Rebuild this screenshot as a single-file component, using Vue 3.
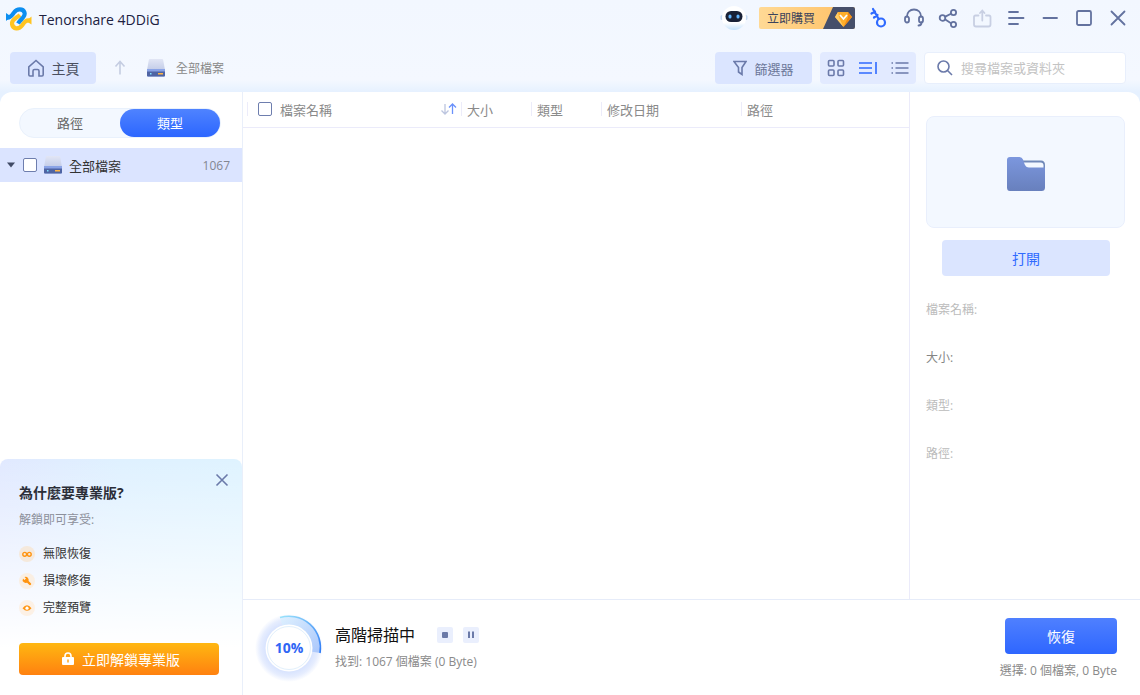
<script setup>
import { ref } from 'vue'

const percent = ref(10)
const tab = ref('type')
const columns = ['大小', '類型', '修改日期', '路徑']
const details = [
  { label: '檔案名稱:', strong: false },
  { label: '大小:', strong: true },
  { label: '類型:', strong: false },
  { label: '路徑:', strong: false },
]
</script>

<template>
  <div class="app">
    <header class="titlebar">
      <svg class="logo" width="26" height="24" viewBox="0 0 26 24" fill="none">
        <path d="M14 8 C10 11.500 5.500 12.500 6 17 C7 22.500 13 22.500 16 18.500 C18.500 15 20 12.500 24.500 13.800" stroke="#ffc421" stroke-width="4.200" />
        <path d="M25.500 9.500 V17.500 L20 14 Z" fill="#ffc421" />
        <path d="M1 10.500 C4 11.500 6 8 8 5.500 C11 1.500 17 1.300 18.500 5.500 C20 9.500 15 11.500 12 16.500" stroke="#0c8ef0" stroke-width="4.200" />
        <path d="M0 6 L5 9.500 L0 14 Z" fill="#0c8ef0" />
      </svg>
      <h1 class="app-name">Tenorshare 4DDiG</h1>

      <button class="robot" aria-label="AI">
        <svg width="28" height="26" viewBox="0 0 28 26">
          <defs>
            <linearGradient id="bot" x1="0" y1="0" x2="0" y2="1">
              <stop offset="0.700" stop-color="#fff" /><stop offset="1" stop-color="#c5e2fb" />
            </linearGradient>
          </defs>
          <rect x="0.500" y="10" width="3" height="5" rx="1.500" fill="#c3d9f4" />
          <rect x="24.500" y="10" width="3" height="5" rx="1.500" fill="#c3d9f4" />
          <circle cx="14" cy="13" r="12" fill="url(#bot)" />
          <rect x="5.500" y="6" width="17" height="11" rx="5.500" fill="#192136" />
          <rect x="8.500" y="9.500" width="3" height="4" rx="1.500" fill="#62b5ff" />
          <rect x="16.500" y="9.500" width="3" height="4" rx="1.500" fill="#62b5ff" />
        </svg>
      </button>

      <button class="buy">
        <span class="buy-text">立即購買</span>
        <svg width="32" height="22" viewBox="0 0 32 22">
          <path d="M10 0 H32 V22 H0 Z" fill="#464f6a" />
          <path d="M15 5 H25 L29 10 L20.500 20 L12 10 Z" fill="#ffae2b" />
          <path d="M15 5 L16 10.500 L20.500 20 L12 10 Z" fill="#ffcd68" />
          <path d="M25 5 L25 10.500 L20.500 20 L29 10 Z" fill="#f28a14" />
          <path d="M17 8 L20.500 12 L24 8" fill="none" stroke="#fff" stroke-width="1.800" />
        </svg>
      </button>

      <nav class="window-tools">
        <button aria-label="註冊" class="key">
          <svg width="22" height="22" viewBox="0 0 22 22"><circle cx="12" cy="15.500" r="4" /><path d="M9.500 11.800 L4 2 M2.500 6.500 L6 4.500 M5 10.500 L8.500 8" /></svg>
        </button>
        <button aria-label="支援">
          <svg width="22" height="22" viewBox="0 0 22 22"><path d="M4 9.500 C4 5 7 2.500 11 2.500 C15 2.500 18 5 18 9.500" /><rect x="2" y="9.500" width="4" height="6" rx="2" /><rect x="16" y="9.500" width="4" height="6" rx="2" /><path d="M18.500 15.500 C18.500 18 17.500 18.500 15.500 18.500" /></svg>
        </button>
        <button aria-label="分享">
          <svg width="22" height="22" viewBox="0 0 22 22"><circle cx="5.500" cy="11" r="2.800" /><circle cx="16.500" cy="5.500" r="2.600" /><circle cx="16.500" cy="17.500" r="2.600" /><path d="M8.300 9.600 L14 6.700 M8.300 12.500 L14 16.200" /></svg>
        </button>
        <button aria-label="匯出" class="faded">
          <svg width="22" height="22" viewBox="0 0 22 22"><path d="M7.500 8.500 H4.500 Q3 8.500 3 10 V17.500 Q3 19.500 5 19.500 H17.500 Q19.500 19.500 19.500 17.500 V10 Q19.500 8.500 18 8.500 H15 M11.300 13.500 V4 M9 6 L11.300 3.500 L13.500 6" /></svg>
        </button>
        <button aria-label="選單">
          <svg width="22" height="22" viewBox="0 0 22 22"><path d="M4 5 H13 M4 11 H18.500 M4 17 H13" /></svg>
        </button>
        <button aria-label="最小化">
          <svg width="22" height="22" viewBox="0 0 22 22"><path d="M4.500 11 H18" /></svg>
        </button>
        <button aria-label="最大化">
          <svg width="22" height="22" viewBox="0 0 22 22"><rect x="4" y="4" width="14" height="14" rx="1.500" /></svg>
        </button>
        <button aria-label="關閉">
          <svg width="22" height="22" viewBox="0 0 22 22"><path d="M4.500 4.500 L17.500 17.500 M17.500 4.500 L4.500 17.500" /></svg>
        </button>
      </nav>
    </header>

    <div class="toolbar">
      <button class="home">
        <svg width="18" height="18" viewBox="0 0 18 18" class="line"><path d="M6 17 H3 Q1.800 17 1.800 15.800 V7.800 L9 1.500 L16.200 7.800 V15.800 Q16.200 17 15 17 H12 V12 Q12 10.500 10.500 10.500 H7.500 Q6 10.500 6 12 Z" /></svg>
        主頁
      </button>
      <button class="up" aria-label="上一層">
        <svg width="14" height="16" viewBox="0 0 14 16" class="line"><path d="M7 14.500 V2 M2.500 6.500 L7 1.500 L11.500 6.500" /></svg>
      </button>
      <div class="crumb">
        <svg width="20" height="20" viewBox="0 0 20 20">
          <defs>
            <linearGradient id="drive" x1="0" y1="0" x2="0" y2="1">
              <stop offset="0" stop-color="#e2e6f5" /><stop offset="1" stop-color="#c3cce8" />
            </linearGradient>
          </defs>
          <path d="M4 1 H16 Q17 1 17.200 2 L19 12 H1 L2.800 2 Q3 1 4 1 Z" fill="url(#drive)" />
          <path d="M1 11 H19 V17.500 Q19 18.500 18 18.500 H2 Q1 18.500 1 17.500 Z" fill="#8aa3e6" />
          <path d="M1 13.500 H19 V17.500 Q19 18.500 18 18.500 H2 Q1 18.500 1 17.500 Z" fill="#4f64a3" />
          <rect x="4" y="15" width="1.500" height="1.500" fill="#7fe0ff" /><rect x="12" y="15" width="5" height="1.500" fill="#ffb545" />
        </svg>
        <span>全部檔案</span>
      </div>
      <button class="filter">
        <svg width="14" height="16" viewBox="0 0 14 16" class="line"><path d="M1 1.500 H13 L9 7.500 V14.500 L5.500 12 V7.500 Z" /></svg>
        篩選器
      </button>
      <div class="views">
        <button aria-label="格狀">
          <svg width="18" height="18" viewBox="0 0 18 18" class="line"><rect x="1.500" y="1.500" width="5.500" height="5.500" rx="1" /><rect x="11" y="1.500" width="5.500" height="5.500" rx="1" /><rect x="1.500" y="11" width="5.500" height="5.500" rx="1" /><rect x="11" y="11" width="5.500" height="5.500" rx="1" /></svg>
        </button>
        <button aria-label="預覽" class="on">
          <svg width="18" height="18" viewBox="0 0 18 18" class="line"><path d="M0 4 H13 M0 9 H13 M0 14 H13 M17 3 V15" /></svg>
        </button>
        <button aria-label="列表">
          <svg width="18" height="18" viewBox="0 0 18 18" class="line"><path d="M0.500 4 H2 M4.500 4 H17.500 M0.500 9 H2 M4.500 9 H17.500 M0.500 14 H2 M4.500 14 H17.500" stroke-width="1.400" /></svg>
        </button>
      </div>
      <label class="search">
        <svg width="18" height="18" viewBox="0 0 18 18" class="line"><circle cx="7.500" cy="7.500" r="5.500" /><path d="M11.500 11.500 L16 16" /></svg>
        <input type="text" placeholder="搜尋檔案或資料夾" aria-label="搜尋檔案或資料夾" />
      </label>
    </div>

    <div class="body">
      <aside class="sidebar">
        <div class="tabs">
          <button :class="{ active: tab === 'path' }" @click="tab = 'path'">路徑</button>
          <button :class="{ active: tab === 'type' }" @click="tab = 'type'">類型</button>
        </div>
        <div class="tree-row">
          <svg width="8" height="6" viewBox="0 0 8 6"><path d="M0 0.500 H8 L4 5.500 Z" fill="#414b66" /></svg>
          <input id="all" type="checkbox" class="check" />
          <label for="all">
            <svg width="20" height="20" viewBox="0 0 20 20">
              <path d="M4 1 H16 Q17 1 17.200 2 L19 12 H1 L2.800 2 Q3 1 4 1 Z" fill="url(#drive)" />
              <path d="M1 11 H19 V17.500 Q19 18.500 18 18.500 H2 Q1 18.500 1 17.500 Z" fill="#8aa3e6" />
              <path d="M1 13.500 H19 V17.500 Q19 18.500 18 18.500 H2 Q1 18.500 1 17.500 Z" fill="#4f64a3" />
              <rect x="4" y="15" width="1.500" height="1.500" fill="#7fe0ff" /><rect x="12" y="15" width="5" height="1.500" fill="#ffb545" />
            </svg>
            全部檔案
          </label>
          <span class="count">1067</span>
        </div>

        <section class="promo">
          <button class="promo-close" aria-label="關閉">
            <svg width="14" height="14" viewBox="0 0 14 14" class="line"><path d="M1.500 1.500 L12.500 12.500 M12.500 1.500 L1.500 12.500" /></svg>
          </button>
          <h2>為什麼要專業版?</h2>
          <p>解鎖即可享受:</p>
          <ul>
            <li>
              <svg width="16" height="16" viewBox="0 0 16 16"><circle cx="8" cy="8" r="8" fill="#f5e9dc" /><circle cx="5.700" cy="8.300" r="1.900" class="amber" /><circle cx="10.300" cy="8.300" r="1.900" class="amber" /></svg>
              無限恢復
            </li>
            <li>
              <svg width="16" height="16" viewBox="0 0 16 16"><circle cx="8" cy="8" r="8" fill="#faefe3" /><path d="M7.500 7.500 L11 11" stroke="#ff9410" stroke-width="2.400" stroke-linecap="round" /><path d="M5.500 4 L7 5.500 L5.500 7 L4 5.500 A3 3 0 1 0 9 5 A3 3 0 0 0 5.500 4 Z" fill="#ff9410" /></svg>
              損壞修復
            </li>
            <li>
              <svg width="16" height="16" viewBox="0 0 16 16"><circle cx="8" cy="8" r="8" fill="#fcf1e6" /><path d="M3.500 8.200 Q8 2.500 12.500 8.200 Q8 13.500 3.500 8.200 Z" fill="#ff9410" /><circle cx="8" cy="8.200" r="1.600" fill="#fff" /></svg>
              完整預覽
            </li>
          </ul>
          <button class="unlock">
            <svg width="12" height="14" viewBox="0 0 12 14"><path d="M3 6 V4 Q3 1 6 1 Q9 1 9 4 V6" fill="none" stroke="#fff" stroke-width="1.600" /><rect x="0" y="5" width="12" height="8" rx="1" fill="#fff" /><path d="M6 7.500 V10.500" stroke="#ffa51a" stroke-width="1.500" /></svg>
            立即解鎖專業版
          </button>
        </section>
      </aside>

      <main class="main">
        <div class="content">
          <div class="files">
            <table>
              <colgroup><col class="c-name" /><col class="c-small" /><col class="c-small" /><col class="c-date" /><col /></colgroup>
              <thead>
                <tr>
                  <th>
                    <div class="cell name">
                      <input id="names" type="checkbox" class="check" />
                      <label for="names">檔案名稱</label>
                      <svg width="18" height="14" viewBox="0 0 18 14" fill="none" stroke-width="1.300"><path d="M5 2 V11.500 M1.500 8.500 L5 12 L8.500 8.500" stroke="#bcc5df" /><path d="M12.500 12 V2.500 M9 5.500 L12.500 2 L16 5.500" stroke="#6a91fb" /></svg>
                    </div>
                  </th>
                  <th v-for="c in columns" :key="c"><div class="cell">{{ c }}</div></th>
                </tr>
              </thead>
            </table>
          </div>
          <aside class="details">
            <div class="preview">
              <svg width="40" height="36" viewBox="0 0 40 36">
                <defs>
                  <linearGradient id="folder" x1="0" y1="0" x2="0" y2="1">
                    <stop offset="0" stop-color="#7c97de" /><stop offset="1" stop-color="#6880bd" />
                  </linearGradient>
                </defs>
                <path d="M14 4.500 H35 Q39 4.500 39 9 V14 H14 Z" fill="#7089b8" />
                <path d="M16 6.500 H34.500 Q37.500 6.500 37.500 9.500 V13 H16 Z" fill="#f3f8ff" />
                <path d="M4 1 H13.500 Q16 1 17 3.500 L18.500 8 Q20 11.500 23 11.500 H39 V31.500 Q39 35 35.500 35 H4 Q1 35 1 31.500 V4 Q1 1 4 1 Z" fill="url(#folder)" />
              </svg>
            </div>
            <button class="open">打開</button>
            <ul>
              <li v-for="d in details" :key="d.label" :class="{ strong: d.strong }">{{ d.label }}</li>
            </ul>
          </aside>
        </div>

        <footer class="footer">
          <div class="ring">
            <svg width="68" height="68" viewBox="0 0 68 68">
              <defs>
                <linearGradient id="arc" x1="0" y1="0" x2="1" y2="1">
                  <stop offset="0" stop-color="#9be4fb" /><stop offset="1" stop-color="#2f7bf6" />
                </linearGradient>
                <linearGradient id="wedge" x1="0" y1="0" x2="1" y2="1">
                  <stop offset="0" stop-color="#dff1ff" /><stop offset="1" stop-color="#a9c6fb" />
                </linearGradient>
                <radialGradient id="halo">
                  <stop offset="0.700" stop-color="#d9e4fe" /><stop offset="0.850" stop-color="#e6edfe" /><stop offset="1" stop-color="#fff" />
                </radialGradient>
              </defs>
              <circle cx="34" cy="34" r="34" fill="url(#halo)" />
              <path d="M25 3.500 A31.500 31.500 0 0 1 65 39 L34 34 Z" fill="url(#wedge)" />
              <path d="M25 3.500 A31.500 31.500 0 0 1 65 39" fill="none" stroke="url(#arc)" stroke-width="1.600" />
              <circle cx="34" cy="34" r="23.500" fill="#fff" />
              <circle cx="34" cy="34" r="21.500" fill="none" stroke="#e2f0fc" />
            </svg>
            <strong>{{ percent }}%</strong>
          </div>
          <div class="status">
            <div class="status-top">
              <h2>高階掃描中</h2>
              <button aria-label="停止"><svg width="16" height="16" viewBox="0 0 16 16"><rect x="5" y="5" width="6" height="6" rx="1" fill="#6b7aa8" /></svg></button>
              <button aria-label="暫停"><svg width="16" height="16" viewBox="0 0 16 16"><path d="M6 4.500 V11 M10 4.500 V11" stroke="#6b7aa8" stroke-width="2" /></svg></button>
            </div>
            <p>找到: 1067 個檔案 (0 Byte)</p>
          </div>
          <div class="result">
            <button class="recover">恢復</button>
            <p>選擇: 0 個檔案, 0 Byte</p>
          </div>
        </footer>
      </main>
    </div>
  </div>
</template>

<style>
body { margin: 0; }
</style>

<style scoped>
* { box-sizing: border-box; }
.app {
  min-height: 100vh;
  display: flex;
  flex-direction: column;
  background: linear-gradient(#f2f7ff 0, #f4f8ff 80px, #e6f1ff 92px);
  font-family: "Open Sans", "Noto Sans CJK TC", sans-serif;
  font-size: 13px;
  color: #333;
}
button { font: inherit; color: inherit; border: 0; padding: 0; background: none; display: flex; align-items: center; justify-content: center; cursor: pointer; }
h1, h2, p, ul { margin: 0; padding: 0; list-style: none; font-weight: 400; }
svg { flex: none; display: block; }
.line { fill: none; stroke: #6b7aaa; stroke-width: 1.600; }
.amber { fill: none; stroke: #ff9410; stroke-width: 1.400; }

.titlebar { height: 36px; display: flex; align-items: center; padding: 0 5px 0 6px; }
.logo { margin-top: 2px; }
.app-name { margin: 4px auto 0 7px; font-size: 14px; line-height: 20px; color: #20213f; }
.robot { margin-right: 11px; }
.buy { height: 22px; border-radius: 2px; overflow: hidden; background: linear-gradient(90deg, #ffd995, #ffc064); font-size: 12px; color: #3c435b; margin-right: 8px; }
.buy-text { padding: 0 8px; }
.window-tools { display: flex; }
.window-tools button { width: 34px; height: 36px; }
.window-tools svg { fill: none; stroke: #63729f; stroke-width: 1.800; stroke-linecap: round; }
.window-tools .key svg { stroke: #2f6aff; stroke-width: 2.200; }
.window-tools .faded svg { stroke: #c8cfe3; }

.toolbar { display: flex; align-items: center; height: 56px; padding: 8px 14px 0 10px; }
.home, .filter, .views { height: 32px; border-radius: 4px; background: #dbe5ff; }
.home { width: 86px; gap: 7px; font-size: 14px; color: #4a4f60; }
.up { width: 48px; }
.up .line { stroke: #c5cde2; }
.crumb { display: flex; align-items: center; gap: 10px; margin: 0 auto 0 2px; font-size: 12px; color: #888; }
.filter { width: 97px; gap: 7px; color: #6b7799; margin-right: 8px; }
.views { display: flex; width: 96px; background: #e2eaff; margin-right: 8px; }
.views button { flex: 1; }
.views .on .line { stroke: #2f6aff; }
.search { width: 202px; height: 32px; display: flex; align-items: center; gap: 7px; padding: 0 11px; background: #fff; border: 1px solid #e8effc; border-radius: 4px; }
.search input { flex: 1; min-width: 0; border: 0; outline: 0; padding: 0; background: none; font: inherit; }
.search input::placeholder { color: #c3c3c3; }

.body { flex: 1; display: flex; background: #fff; border-radius: 12px 12px 0 0; overflow: hidden; }
.sidebar { width: 243px; border-right: 1px solid #e9effa; display: flex; flex-direction: column; }
.tabs { display: flex; margin: 16px 21px 10px 19px; height: 30px; border-radius: 15px; border: 1px solid #e9f1fc; background: #f3f8ff; }
.tabs button { flex: 1; border-radius: 14px; padding-bottom: 1px; color: #666; }
.tabs .active { color: #fff; background: linear-gradient(#4f83ff, #2c66ff); }
.tree-row { display: flex; align-items: center; height: 34px; background: #dbe4ff; padding: 0 12px 0 7px; }
.tree-row .check { margin: 0 6px 0 8px; }
.tree-row label { display: flex; align-items: center; gap: 6px; }
.count { margin-left: auto; font-size: 12px; color: #838691; }
.check { appearance: none; flex: none; width: 14px; height: 14px; margin: 0; border: 1px solid #6e7eae; border-radius: 2px; background: #fff; }

.promo { position: relative; margin-top: auto; padding: 24px 23px 20px 19px; border-radius: 8px 8px 0 0; background: linear-gradient(transparent, #fff 80%), linear-gradient(90deg, #e1e9ff, #dff1ff 50%, #dff3ff); }
.promo-close { position: absolute; top: 14px; right: 13px; }
.promo h2 { font-size: 14px; line-height: 20px; font-weight: 700; color: #2b2e38; }
.promo p { margin-top: 7px; font-size: 12px; line-height: 20px; color: #8d909b; }
.promo ul { margin: 10px 0 22px; }
.promo li { display: flex; align-items: center; gap: 8px; height: 27px; font-size: 12px; line-height: 20px; }
.unlock { width: 100%; height: 32px; gap: 8px; padding-left: 4px; border-radius: 4px; font-size: 14px; color: #fff; background: linear-gradient(#ffb711, #ff8110); }

.main { flex: 1; min-width: 0; display: flex; flex-direction: column; }
.content { flex: 1; display: flex; }
.files { flex: 1; min-width: 0; }
table { width: 100%; table-layout: fixed; border-collapse: collapse; }
.c-name { width: 218px; }
.c-small { width: 70px; }
.c-date { width: 140px; }
thead tr { border-bottom: 1px solid #ebebfa; }
th { height: 35px; padding: 0; text-align: left; font-weight: 400; color: #8a8a8a; }
.cell { display: flex; align-items: center; height: 14px; border-left: 1px solid #ececfa; padding-left: 5px; }
.cell.name { margin-left: 4px; padding: 0 3px 0 10px; }
.name label { margin: 0 auto 0 8px; }
.details { width: 231px; border-left: 1px solid #ebebfa; padding: 24px 15px 0 16px; }
.preview { height: 112px; border: 1px solid #e9effc; border-radius: 8px; background: #f3f8ff; display: flex; align-items: center; justify-content: center; padding-top: 4px; }
.open { width: calc(100% - 31px); height: 36px; margin: 12px 15px 9px 16px; border-radius: 4px; background: #dbe5ff; color: #2f6aff; font-size: 14px; }
.details li { height: 48px; display: flex; align-items: center; font-size: 12px; color: #bbb; }
.details .strong { color: #858585; }

.footer { border-top: 1px solid #e6ecf9; height: 96px; display: flex; align-items: center; padding: 0 23px 0 12px; }
.ring { display: grid; place-items: center; }
.ring > * { grid-area: 1 / 1; }
.ring strong { position: relative; font-size: 14px; color: #2f66f5; }
.status { margin-left: 12px; }
.status-top { display: flex; align-items: center; }
.status h2 { font-size: 16px; line-height: 24px; color: #111; margin-right: 22px; }
.status button { background: #eaeffd; border-radius: 2px; margin-right: 10px; }
.status p, .result p { font-size: 12px; line-height: 20px; color: #8a8a8a; }
.status p { margin-top: 5px; }
.result { margin-left: auto; padding-top: 4px; display: flex; flex-direction: column; align-items: flex-end; gap: 7px; }
.recover { width: 112px; height: 36px; border-radius: 4px; font-size: 14px; color: #fff; background: linear-gradient(#4f80ff, #2e66ff); }
</style>
